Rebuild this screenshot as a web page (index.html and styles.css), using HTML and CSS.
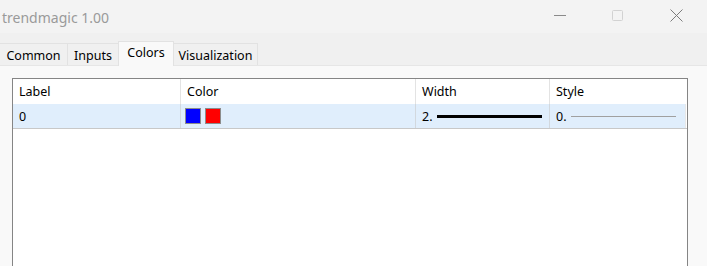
FILE: index.html
```html
<!DOCTYPE html>
<html lang="en">
  <head>
    <meta charset="UTF-8" />
    <title>trendmagic 1.00</title>
    <link rel="stylesheet" href="styles.css">
  </head>
  <body>
    <div class="window">
      <div class="titlebar">
        <div class="title">trendmagic 1.00</div>
        <div class="controls">
          <span class="ctl ctl-min">
            <svg width="14" height="14" viewBox="0 0 14 14"><path d="M1 6.5h12" stroke="#8a8a8a" stroke-width="1" /></svg>
          </span>
          <span class="ctl ctl-max">
            <svg width="14" height="14" viewBox="0 0 14 14"><rect x="1.5" y="1.5" width="10" height="10" rx="1" fill="none" stroke="#d2d2d2" stroke-width="1" /></svg>
          </span>
          <span class="ctl ctl-close">
            <svg width="14" height="14" viewBox="0 0 14 14"><path d="M0.5 0.5l12 12M12.5 0.5l-12 12" stroke="#7c7c7c" stroke-width="1" /></svg>
          </span>
        </div>
      </div>

      <div class="tabs">
        <div class="tab tab-common">Common</div>
        <div class="tab tab-inputs">Inputs</div>
        <div class="tab tab-colors active">Colors</div>
        <div class="tab tab-vis">Visualization</div>
      </div>

      <div class="panel">
        <div class="table">
          <div class="row head">
            <div class="cell c-label">Label</div>
            <div class="cell c-color">Color</div>
            <div class="cell c-width">Width</div>
            <div class="cell c-style">Style</div>
            <div class="cell c-end"></div>
          </div>
          <div class="row data">
            <div class="cell c-label">0</div>
            <div class="cell c-color swatches">
              <span class="swatch blue"></span>
              <span class="swatch red"></span>
            </div>
            <div class="cell c-width">
              <span class="num">2.</span>
              <span class="line thick"></span>
            </div>
            <div class="cell c-style">
              <span class="num">0.</span>
              <span class="line thin"></span>
            </div>
            <div class="cell c-end"></div>
          </div>
        </div>
      </div>
    </div>
  </body>
</html>
```

FILE: styles.css
```css
body {
  margin: 0;
  background-color: #f0f0f0;
  font-family: "Noto Sans", "Open Sans", sans-serif;
  font-size: 12.5px;
  color: #000;
}

.window {
  width: 707px;
  height: 266px;
  overflow: hidden;
  display: flex;
  flex-direction: column;
}

.titlebar {
  flex-shrink: 0;
  height: 33px;
  background-color: #f3f3f3;
  display: flex;
  align-items: center;
  justify-content: space-between;
}

.title {
  padding-left: 2px;
  padding-top: 1px;
  font-size: 14px;
  color: #9a9a9a;
}

.controls {
  display: flex;
  align-items: center;
  padding-right: 23px;
  padding-bottom: 1px;
}

.ctl {
  display: flex;
  width: 14px;
  height: 14px;
}

.ctl-min {
  margin-right: 44px;
}

.ctl-max {
  margin-right: 45px;
}

.tabs {
  flex-shrink: 0;
  display: flex;
  align-items: flex-end;
  height: 33px;
}

.tab {
  height: 22px;
  line-height: 23px;
  text-align: center;
  background-color: #f0f0f0;
  border: 1px solid #e2e2e2;
  border-bottom: none;
  margin-right: -1px;
  color: #000;
}

.tab-common {
  width: 67px;
  border-left: none;
}

.tab-inputs {
  width: 50px;
}

.tab-colors {
  width: 54px;
}

.tab-vis {
  width: 83px;
}

.tab.active {
  height: 24px;
  line-height: 21px;
  background-color: #f9f9f9;
  position: relative;
  z-index: 1;
}

.panel {
  flex: 1;
  min-height: 0;
  width: 698px;
  background-color: #f9f9f9;
  border-right: 1px solid #e3e3e3;
  border-top: 1px solid #e6e6e6;
  margin-top: -1px;
  padding: 12px 0 0 12px;
  overflow: hidden;
}

.table {
  width: 674px;
  height: 200px;
  background-color: #fff;
  border: 1px solid #858585;
  border-bottom: none;
}

.row {
  display: flex;
  height: 25px;
}

.row.data {
  height: 24px;
  background-color: #e0eefc;
  border-bottom: 1px solid #c8c8c8;
}

.cell {
  display: flex;
  align-items: center;
  padding-left: 6px;
  border-right: 1px solid #e3e3e3;
  white-space: nowrap;
}

.row.data .cell {
  border-right-color: #d2d8de;
}

.c-label {
  width: 161px;
}

.c-color {
  width: 228px;
  gap: 4px;
}

.c-color.swatches {
  width: 230px;
  padding-left: 4px;
}

.c-width {
  width: 127px;
}

.c-style {
  width: 129px;
}

.c-end {
  flex: 1;
  padding: 0;
  border-right: none;
  border-left: 1px solid #e8e8e8;
  margin-left: -1px;
  background-color: #fff;
}

.row.head .c-end {
  border-left: none;
}

.swatch {
  width: 14px;
  height: 14px;
  border: 1px solid #8c8c8c;
}

.swatch.blue {
  background-color: #0000ff;
}

.swatch.red {
  background-color: #ff0000;
}

.num {
  width: 15px;
}

.line {
  display: block;
  width: 105px;
}

.line.thick {
  height: 3px;
  background-color: #000;
}

.line.thin {
  height: 1px;
  background-color: #a0a0a0;
}
```
